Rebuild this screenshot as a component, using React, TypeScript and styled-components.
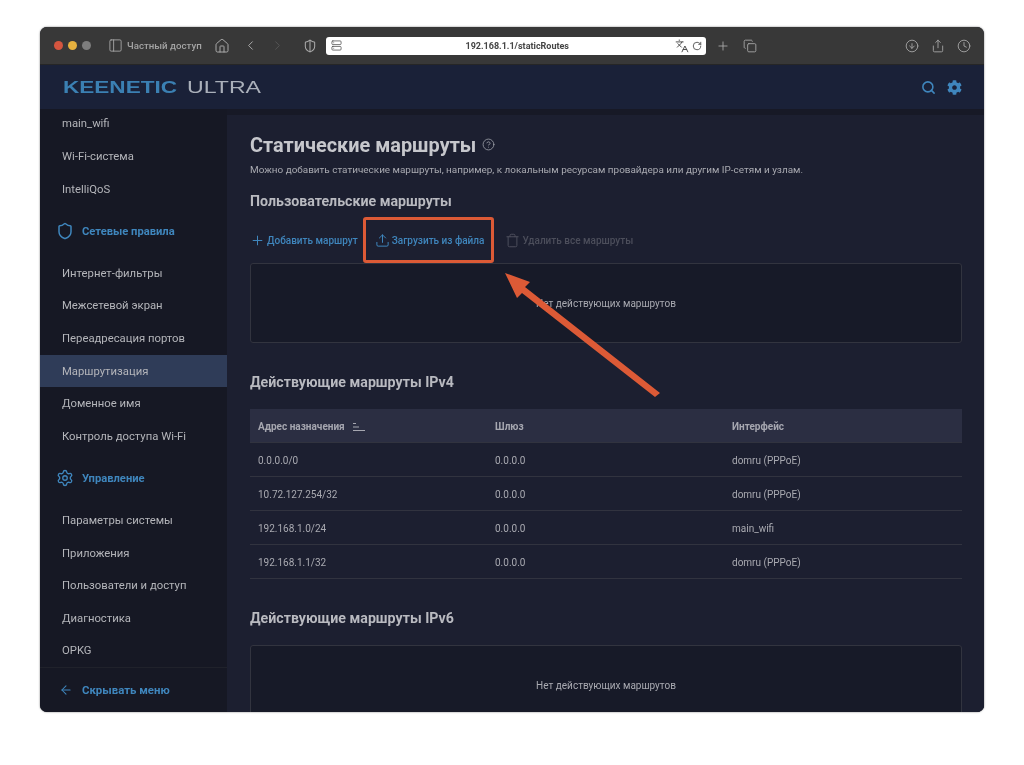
import styled, { createGlobalStyle } from "styled-components";
import {
  ArrowLeft,
  ChevronLeft,
  ChevronRight,
  CircleArrowDown,
  CircleHelp,
  Clock,
  Copy,
  House,
  Languages,
  PanelLeft,
  Plus,
  RotateCw,
  Search,
  Settings,
  Share,
  Shield,
  ShieldHalf,
  Trash,
  Upload,
  Server,
} from "lucide-react";
import { FaCog } from "react-icons/fa";

const BLUE = "#3f86bd";
const ORANGE = "#dc5a36";

const GlobalStyle = createGlobalStyle`
  html, body {
    margin: 0;
    background: #fff;
    font-family: Roboto, "Liberation Sans", sans-serif;
  }
`;

const Page = styled.div`
  width: 1024px;
  height: 765px;
  padding: 27px 40px 53px;
  box-sizing: border-box;
  overflow: hidden;
`;

const Window = styled.div`
  height: 685px;
  display: flex;
  flex-direction: column;
  border-radius: 7px;
  overflow: hidden;
  background: #171a27;
  box-shadow: 0 0 2px rgba(0, 0, 0, 0.55);
  filter: blur(0.4px);
`;

const Toolbar = styled.div`
  height: 38px;
  flex-shrink: 0;
  display: flex;
  align-items: center;
  background: #383838;
  border-bottom: 1px solid #262626;
  box-sizing: border-box;
  padding-left: 14px;
  color: #a9a9a9;
`;

const Dot = styled.span<{ $color: string }>`
  width: 9px;
  height: 9px;
  border-radius: 50%;
  background: ${({ $color }) => $color};
  margin-right: 5px;
`;

const PrivateLabel = styled.span`
  font-size: 9.7px;
  font-weight: 500;
  color: #a4a4a4;
  margin: 0 12px 0 4px;
  white-space: nowrap;
`;

const ToolIcon = styled.span<{ $left?: number; $dim?: boolean }>`
  display: flex;
  margin-left: ${({ $left }) => $left ?? 0}px;
  color: ${({ $dim }) => ($dim ? "#555" : "#a9a9a9")};
`;

const UrlBar = styled.div`
  width: 380px;
  height: 18px;
  margin: 0 9px;
  flex-shrink: 0;
  display: flex;
  align-items: center;
  padding: 0 4px 0 5px;
  box-sizing: border-box;
  background: #fff;
  border-radius: 3px;
  color: #444;
`;

const UrlText = styled.span`
  flex: 1;
  text-align: center;
  font-size: 9px;
  font-weight: 700;
  color: #444;
  padding-left: 18px;
`;

const Header = styled.header`
  height: 44px;
  flex-shrink: 0;
  display: flex;
  align-items: center;
  justify-content: space-between;
  padding: 0 22px 0 23px;
  background: #1a2138;
`;

const Logo = styled.svg`
  display: block;
`;

const HeaderIcons = styled.div`
  display: flex;
  align-items: center;
  gap: 11px;
  color: ${BLUE};
`;

const Body = styled.div`
  flex: 1;
  min-height: 0;
  display: flex;
`;

const Sidebar = styled.aside`
  width: 187px;
  flex-shrink: 0;
  display: flex;
  flex-direction: column;
  background: #161824;
  overflow: hidden;
`;

const SideList = styled.nav`
  flex: 1;
  min-height: 0;
  margin-top: -1.5px;
`;

const SideItem = styled.div<{ $active?: boolean }>`
  height: 32.65px;
  display: flex;
  align-items: center;
  padding-left: 22px;
  font-size: 11.3px;
  color: #b4b5ba;
  background: ${({ $active }) => ($active ? "#2f3c58" : "transparent")};
`;

const SideSection = styled.div`
  height: 51.4px;
  display: flex;
  align-items: center;
  gap: 8px;
  padding-left: 16px;
  font-size: 11.2px;
  font-weight: 700;
  color: ${BLUE};
`;

const Collapse = styled.div`
  height: 45px;
  flex-shrink: 0;
  display: flex;
  align-items: center;
  gap: 9px;
  padding-left: 19px;
  border-top: 1px solid #20222b;
  box-sizing: border-box;
  font-size: 11.4px;
  font-weight: 700;
  color: ${BLUE};
`;

const MainWrap = styled.main`
  flex: 1;
  min-width: 0;
  padding-top: 6px;
  background: #171926;
`;

const Panel = styled.div`
  position: relative;
  height: 100%;
  box-sizing: border-box;
  padding: 16px 22px 0 23px;
  background: #1c1f30;
  overflow: hidden;
`;

const TitleRow = styled.div`
  height: 27px;
  display: flex;
  align-items: center;
  gap: 6px;
  color: #9fa1aa;
`;

const Title = styled.h1`
  margin: 1px 0 0;
  font-size: 19.9px;
  font-weight: 700;
  color: #c6c7cc;
`;

const Description = styled.p`
  margin: 5px 0 0;
  height: 14px;
  line-height: 14px;
  font-size: 9.93px;
  color: #a9aab1;
`;

const SectionTitle = styled.h2<{ $top: number }>`
  margin: ${({ $top }) => $top}px 0 0;
  height: 20px;
  line-height: 20px;
  font-size: 14.2px;
  font-weight: 700;
  color: #b9bac0;
`;

const Actions = styled.div`
  height: 46px;
  display: flex;
  align-items: center;
  margin-top: 6px;
`;

const Action = styled.div<{ $muted?: boolean; $left: number; $ring?: boolean }>`
  position: relative;
  display: flex;
  align-items: center;
  gap: 2px;
  margin-left: ${({ $left }) => $left}px;
  font-size: 10px;
  font-weight: 500;
  white-space: nowrap;
  color: ${({ $muted }) => ($muted ? "#4c4e5b" : BLUE)};

  ${({ $ring }) =>
    $ring
      ? `&::after {
    content: "";
    position: absolute;
    left: -12px;
    right: -10px;
    top: -16px;
    bottom: -15px;
    border: 3px solid ${ORANGE};
    border-radius: 3px;
  }`
      : ""}
`;

const EmptyBox = styled.div`
  height: 80px;
  flex-shrink: 0;
  display: flex;
  align-items: center;
  justify-content: center;
  box-sizing: border-box;
  background: #171a28;
  border: 1px solid #32343f;
  border-radius: 3px;
  font-size: 10px;
  color: #a9aab1;
`;

const Table = styled.div`
  margin-top: 17px;
`;

const Row = styled.div<{ $head?: boolean }>`
  height: 34px;
  display: grid;
  grid-template-columns: repeat(3, 237px);
  align-items: center;
  padding: 2px 0 0 8px;
  box-sizing: border-box;
  font-size: 10px;
  font-weight: ${({ $head }) => ($head ? 700 : 400)};
  color: ${({ $head }) => ($head ? "#a6a7b0" : "#a9aab1")};
  background: ${({ $head }) => ($head ? "#2b2e42" : "transparent")};
  border-bottom: 1px solid #31333f;
`;

const HeadCell = styled.span`
  display: flex;
  align-items: center;
  gap: 8px;
`;

const Arrow = styled.svg`
  position: absolute;
  left: 270px;
  top: 155px;
  pointer-events: none;
`;

const TOP_ITEMS = ["main_wifi", "Wi-Fi-система", "IntelliQoS"];
const NET_ITEMS = [
  "Интернет-фильтры",
  "Межсетевой экран",
  "Переадресация портов",
  "Маршрутизация",
  "Доменное имя",
  "Контроль доступа Wi-Fi",
];
const MGMT_ITEMS = [
  "Параметры системы",
  "Приложения",
  "Пользователи и доступ",
  "Диагностика",
  "OPKG",
];
const ROUTES = [
  ["0.0.0.0/0", "0.0.0.0", "domru (PPPoE)"],
  ["10.72.127.254/32", "0.0.0.0", "domru (PPPoE)"],
  ["192.168.1.0/24", "0.0.0.0", "main_wifi"],
  ["192.168.1.1/32", "0.0.0.0", "domru (PPPoE)"],
];

function SortIcon() {
  return (
    <svg width="12" height="10" viewBox="0 0 12 10" fill="none" stroke="#a6a7b0" strokeWidth="1.2">
      <path d="M0 1.5h3M0 5h6M0 8.5h12" />
    </svg>
  );
}

export default function App() {
  return (
    <Page>
      <GlobalStyle />
      <Window>
        <Toolbar>
          <Dot $color="#d4553f" />
          <Dot $color="#e6b13f" />
          <Dot $color="#7d7d7d" />
          <ToolIcon $left={12}>
            <PanelLeft size={15} strokeWidth={1.4} />
          </ToolIcon>
          <PrivateLabel>Частный доступ</PrivateLabel>
          <ToolIcon>
            <House size={16} strokeWidth={1.5} />
          </ToolIcon>
          <ToolIcon $left={13}>
            <ChevronLeft size={15} strokeWidth={1.6} />
          </ToolIcon>
          <ToolIcon $left={12} $dim>
            <ChevronRight size={15} strokeWidth={1.6} />
          </ToolIcon>
          <ToolIcon $left={18}>
            <ShieldHalf size={14} strokeWidth={1.8} />
          </ToolIcon>
          <UrlBar>
            <Server size={11} strokeWidth={1.6} />
            <UrlText>192.168.1.1/staticRoutes</UrlText>
            <Languages size={14} strokeWidth={1.6} />
            <RotateCw size={10} strokeWidth={2} style={{ marginLeft: 3 }} />
          </UrlBar>
          <ToolIcon $left={1}>
            <Plus size={14} strokeWidth={1.5} />
          </ToolIcon>
          <ToolIcon $left={13}>
            <Copy size={14} strokeWidth={1.5} />
          </ToolIcon>
          <ToolIcon $left={148}>
            <CircleArrowDown size={14} strokeWidth={1.5} />
          </ToolIcon>
          <ToolIcon $left={12}>
            <Share size={14} strokeWidth={1.5} />
          </ToolIcon>
          <ToolIcon $left={12}>
            <Clock size={14} strokeWidth={1.5} />
          </ToolIcon>
        </Toolbar>

        <Header>
          <Logo width="200" height="16" viewBox="0 0 200 16">
            <text
              x="0"
              y="14"
              fontFamily="Liberation Sans"
              fontWeight="700"
              fontSize="16"
              fill="#3b80b3"
              textLength="114"
              lengthAdjust="spacingAndGlyphs"
            >
              KEENETIC
            </text>
            <text
              x="124"
              y="14"
              fontFamily="Liberation Sans"
              fontSize="16"
              fill="#aab0ba"
              textLength="74"
              lengthAdjust="spacingAndGlyphs"
            >
              ULTRA
            </text>
          </Logo>
          <HeaderIcons>
            <Search size={15} strokeWidth={2.5} />
            <FaCog size={15} />
          </HeaderIcons>
        </Header>

        <Body>
          <Sidebar>
            <SideList>
              {TOP_ITEMS.map((item) => (
                <SideItem key={item}>{item}</SideItem>
              ))}
              <SideSection>
                <Shield size={18} strokeWidth={2} />
                Сетевые правила
              </SideSection>
              {NET_ITEMS.map((item) => (
                <SideItem key={item} $active={item === "Маршрутизация"}>
                  {item}
                </SideItem>
              ))}
              <SideSection>
                <Settings size={18} strokeWidth={1.8} />
                Управление
              </SideSection>
              {MGMT_ITEMS.map((item) => (
                <SideItem key={item}>{item}</SideItem>
              ))}
            </SideList>
            <Collapse>
              <ArrowLeft size={14} strokeWidth={1.8} />
              Скрывать меню
            </Collapse>
          </Sidebar>

          <MainWrap>
            <Panel>
              <TitleRow>
                <Title>Статические маршруты</Title>
                <CircleHelp size={13} strokeWidth={1.5} />
              </TitleRow>
              <Description>
                Можно добавить статические маршруты, например, к локальным ресурсам провайдера или другим IP-сетям и узлам.
              </Description>
              <SectionTitle $top={14}>Пользовательские маршруты</SectionTitle>
              <Actions>
                <Action $left={0}>
                  <Plus size={15} strokeWidth={1.6} />
                  Добавить маршрут
                </Action>
                <Action $left={17} $ring>
                  <Upload size={15} strokeWidth={1.6} />
                  Загрузить из файла
                </Action>
                <Action $left={21} $muted>
                  <Trash size={15} strokeWidth={1.6} />
                  Удалить все маршруты
                </Action>
              </Actions>
              <EmptyBox>Нет действующих маршрутов</EmptyBox>
              <SectionTitle $top={29}>Действующие маршруты IPv4</SectionTitle>
              <Table>
                <Row $head>
                  <HeadCell>
                    Адрес назначения
                    <SortIcon />
                  </HeadCell>
                  <span>Шлюз</span>
                  <span>Интерфейс</span>
                </Row>
                {ROUTES.map((route) => (
                  <Row key={route[0]}>
                    {route.map((cell, i) => (
                      <span key={i}>{cell}</span>
                    ))}
                  </Row>
                ))}
              </Table>
              <SectionTitle $top={29}>Действующие маршруты IPv6</SectionTitle>
              <Table>
                <EmptyBox>Нет действующих маршрутов</EmptyBox>
              </Table>
              <Arrow width="170" height="135" viewBox="0 0 170 135">
                <polygon
                  points="8,3 33,12 28,17 163,123 158,127 25,23 20,28"
                  fill={ORANGE}
                />
              </Arrow>
            </Panel>
          </MainWrap>
        </Body>
      </Window>
    </Page>
  );
}
